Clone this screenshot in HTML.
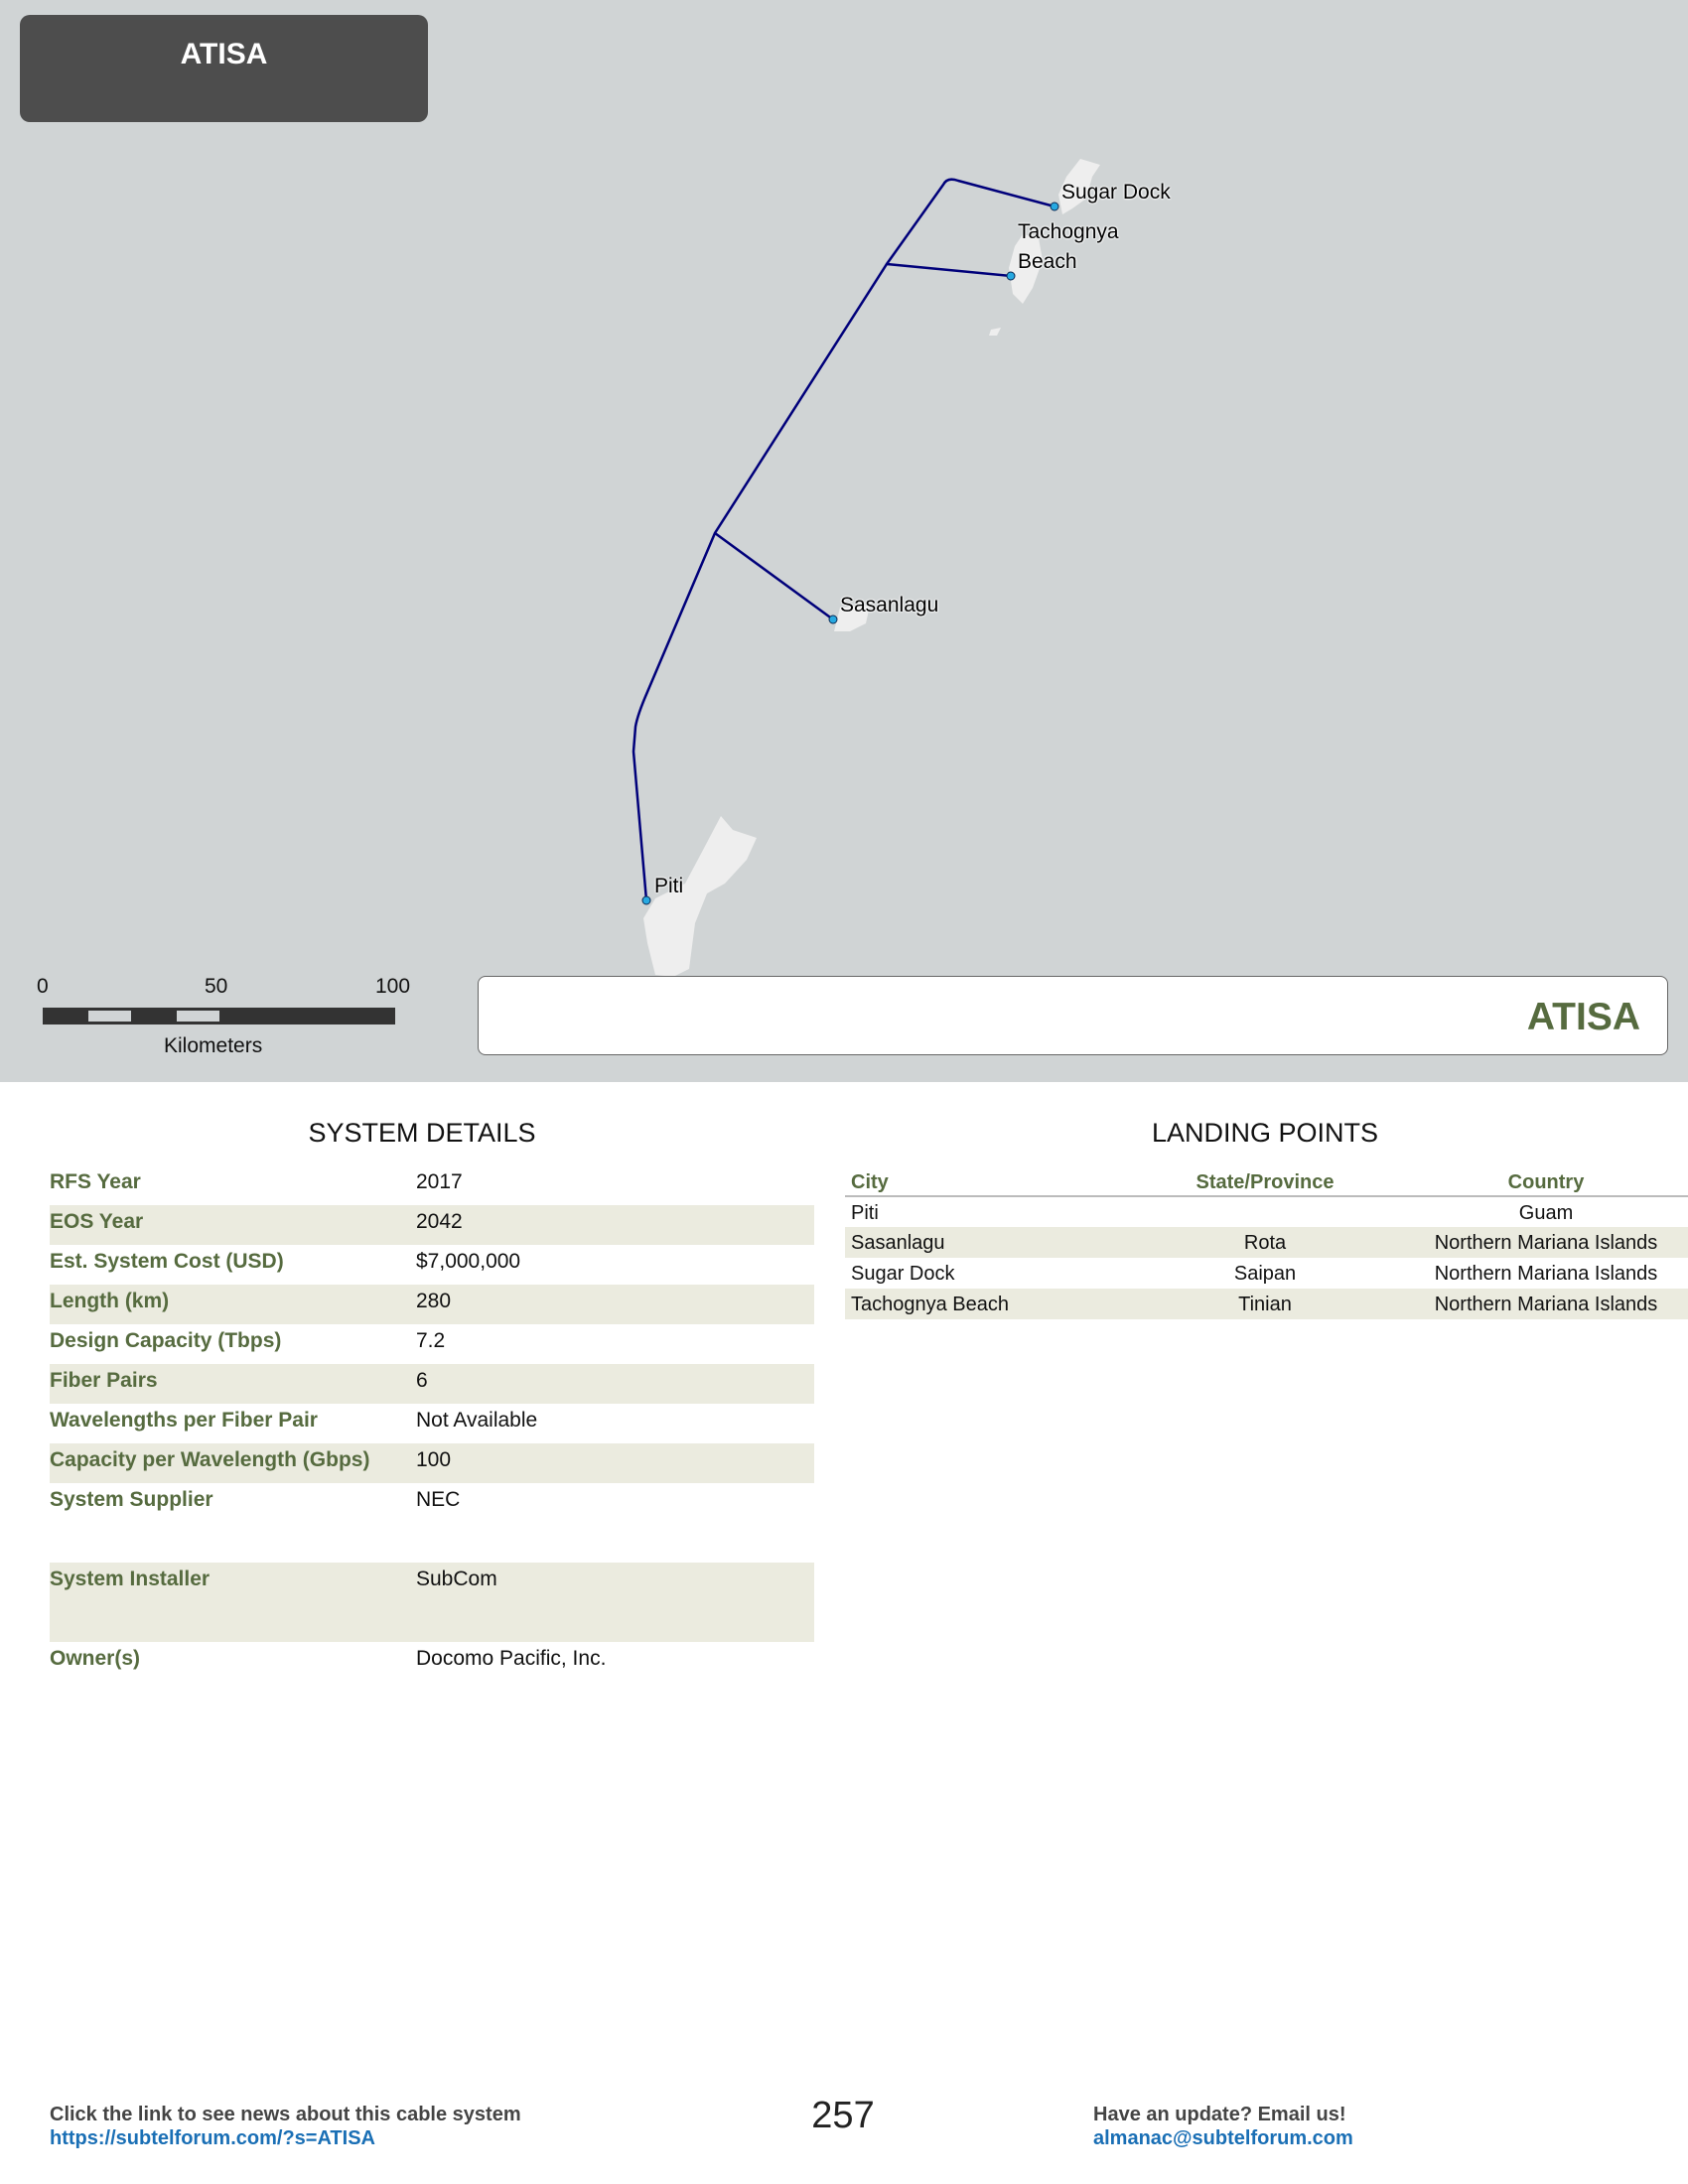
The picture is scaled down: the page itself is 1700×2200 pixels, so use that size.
<!DOCTYPE html>
<html><head><meta charset="utf-8"><style>
*{margin:0;padding:0;box-sizing:border-box}
body{width:1700px;height:2200px;background:#fff;font-family:"Liberation Sans",sans-serif;position:relative;overflow:hidden;color:#111}
.map{position:absolute;left:0;top:0;width:1700px;height:1090px;background:#d0d4d5}
.abs{position:absolute;white-space:nowrap}
.tbox{position:absolute;left:20px;top:15px;width:411px;height:108px;background:#4d4d4d;border-radius:10px}
.lbl{font-size:21px;color:#000;text-shadow:0 0 2px #fff,0 0 2px #fff,0 0 2px #fff}
.row{position:absolute;left:50px;width:770px;height:40px;font-size:21px}
.row.s{background:#ebebdf}
.row .k{position:absolute;left:0;top:5px;color:#566b3f;font-weight:bold;white-space:nowrap}
.row .v{position:absolute;left:369px;top:5px;white-space:nowrap}
.lr{position:absolute;left:851px;width:849px;height:31px;font-size:20px}
.lr.s{background:#ebebdf}
.lr span{position:absolute;top:5px;white-space:nowrap}
.c1{left:6px}.c2{left:423px;transform:translateX(-50%)}.c3{left:706px;transform:translateX(-50%)}
h2{position:absolute;font-size:27px;font-weight:normal;transform:translateX(-50%);top:1126px;white-space:nowrap}
</style></head><body>
<div class="map">
<svg width="1700" height="1090" style="position:absolute;left:0;top:0">
<g fill="#eeeeee">
<path d="M1088 160 L1108 166 L1100 178 L1094 200 L1080 210 L1070 216 L1066 196 L1074 178 Z"/>
<path d="M1030 236 L1046 240 L1050 262 L1040 290 L1030 306 L1020 296 L1016 270 L1022 248 Z"/>
<path d="M998 332 L1008 330 L1004 338 L996 338 Z"/>
<path d="M846 612 L876 610 L872 628 L856 636 L840 636 Z"/>
<path d="M726 822 L738 836 L762 844 L752 866 L730 890 L712 900 L700 930 L694 976 L678 984 L660 982 L652 950 L648 925 L660 905 L690 890 L706 860 Z"/>
</g>
<path d="M1062 208 L965 182 Q954 178 950 186 L893 266 L720 537 L652 697 Q642 720 640 732 L638 757 L651 907" fill="none" stroke="#00007a" stroke-width="2.5"/>
<path d="M893 266 L1018 278 M720 537 L839 624" fill="none" stroke="#00007a" stroke-width="2.5"/>
<g fill="#27a9e1" stroke="#0a2a55" stroke-width="1"><circle cx="1062" cy="208" r="4"/><circle cx="1018" cy="278" r="4"/><circle cx="839" cy="624" r="4"/><circle cx="651" cy="907" r="4"/></g>
</svg>
<div class="tbox"></div>
<div class="abs" style="left:20px;width:411px;text-align:center;top:38px;color:#fff;font-size:30px;font-weight:bold">ATISA</div>
<div class="abs lbl" style="left:1069px;top:182px">Sugar Dock</div>
<div class="abs lbl" style="left:1025px;top:222px">Tachognya</div>
<div class="abs lbl" style="left:1025px;top:252px">Beach</div>
<div class="abs lbl" style="left:846px;top:598px">Sasanlagu</div>
<div class="abs lbl" style="left:659px;top:881px">Piti</div>
<div class="abs" style="left:37px;top:982px;font-size:21px">0</div>
<div class="abs" style="left:206px;top:982px;font-size:21px">50</div>
<div class="abs" style="left:378px;top:982px;font-size:21px">100</div>
<div class="abs" style="left:43px;top:1015px;width:355px;height:17px;background:#333"></div>
<div class="abs" style="left:89px;top:1018px;width:43px;height:11px;background:#d0d4d5"></div>
<div class="abs" style="left:178px;top:1018px;width:43px;height:11px;background:#d0d4d5"></div>
<div class="abs" style="left:165px;top:1042px;font-size:21px">Kilometers</div>
<div class="abs" style="left:481px;top:983px;width:1199px;height:80px;background:#fff;border:1.5px solid #666;border-radius:8px"></div>
<div class="abs" style="right:48px;top:1003px;font-size:39px;font-weight:bold;color:#566b3f">ATISA</div>
</div>

<h2 style="left:425px">SYSTEM DETAILS</h2>
<h2 style="left:1274px">LANDING POINTS</h2>

<div class="row" style="top:1174px"><span class="k">RFS Year</span><span class="v">2017</span></div>
<div class="row s" style="top:1214px"><span class="k">EOS Year</span><span class="v">2042</span></div>
<div class="row" style="top:1254px"><span class="k">Est. System Cost (USD)</span><span class="v">$7,000,000</span></div>
<div class="row s" style="top:1294px"><span class="k">Length (km)</span><span class="v">280</span></div>
<div class="row" style="top:1334px"><span class="k">Design Capacity (Tbps)</span><span class="v">7.2</span></div>
<div class="row s" style="top:1374px"><span class="k">Fiber Pairs</span><span class="v">6</span></div>
<div class="row" style="top:1414px"><span class="k">Wavelengths per Fiber Pair</span><span class="v">Not Available</span></div>
<div class="row s" style="top:1454px"><span class="k">Capacity per Wavelength (Gbps)</span><span class="v">100</span></div>
<div class="row" style="top:1494px;height:80px"><span class="k">System Supplier</span><span class="v">NEC</span></div>
<div class="row s" style="top:1574px;height:80px"><span class="k">System Installer</span><span class="v">SubCom</span></div>
<div class="row" style="top:1654px"><span class="k">Owner(s)</span><span class="v">Docomo Pacific, Inc.</span></div>

<div class="lr" style="top:1174px;color:#566b3f;font-weight:bold;height:32px;border-bottom:2px solid #bbb"><span class="c1" style="top:6px">City</span><span class="c2" style="top:6px">State/Province</span><span class="c3" style="top:6px">Country</span></div>
<div class="lr" style="top:1206px"><span class="c1">Piti</span><span class="c3">Guam</span></div>
<div class="lr s" style="top:1236px"><span class="c1">Sasanlagu</span><span class="c2">Rota</span><span class="c3">Northern Mariana Islands</span></div>
<div class="lr" style="top:1267px"><span class="c1">Sugar Dock</span><span class="c2">Saipan</span><span class="c3">Northern Mariana Islands</span></div>
<div class="lr s" style="top:1298px"><span class="c1">Tachognya Beach</span><span class="c2">Tinian</span><span class="c3">Northern Mariana Islands</span></div>

<div class="abs" style="left:50px;top:2119px;font-size:20px;font-weight:bold;color:#444">Click the link to see news about this cable system</div>
<div class="abs" style="left:50px;top:2143px;font-size:20px;font-weight:bold;color:#1a6fb5">https://subtelforum.com/?s=ATISA</div>
<div class="abs" style="left:849px;top:2110px;font-size:38px;transform:translateX(-50%);color:#222">257</div>
<div class="abs" style="left:1101px;top:2119px;font-size:20px;font-weight:bold;color:#444">Have an update? Email us!</div>
<div class="abs" style="left:1101px;top:2143px;font-size:20px;font-weight:bold;color:#1a6fb5">almanac@subtelforum.com</div>
</body></html>
